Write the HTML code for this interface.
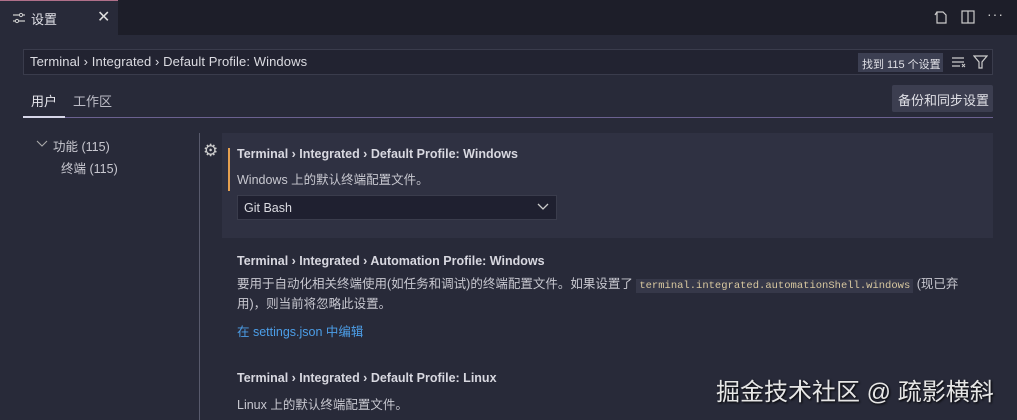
<html><head><style>
body{margin:0;width:1017px;height:420px;background:#282a39;font-family:"Liberation Sans","Noto Sans CJK SC",sans-serif;color:#cfd0d8;overflow:hidden;position:relative;font-size:13px}
.a{position:absolute}
</style></head><body>
<div class="a" style="left:0;top:0;width:1017px;height:35px;background:#1d1e29"></div>
<div class="a" style="left:0;top:0;width:118px;height:35px;background:#282a39;border-top:1px solid #b0708a;box-sizing:border-box"></div>
<svg class="a" style="left:12px;top:12px" width="14" height="12"><path d="M1 3h12M1 9h12" stroke="#ccc" stroke-width="1.3"/><circle cx="9" cy="3" r="1.6" fill="#282a39" stroke="#ccc"/><circle cx="5" cy="9" r="1.6" fill="#282a39" stroke="#ccc"/></svg>
<div class="a" style="left:31px;top:9px;font-size:13px;color:#e0e0e6">设置</div>
<div class="a" style="left:97px;top:7px;font-size:16px;color:#ddd">✕</div>
<svg class="a" style="left:933px;top:9px" width="16" height="16"><path d="M4 3h6l3 3v8H4z M2 6l2-3" fill="none" stroke="#ccc" stroke-width="1.2"/></svg>
<svg class="a" style="left:961px;top:10px" width="14" height="14"><rect x="1" y="1" width="12" height="12" fill="none" stroke="#ccc" stroke-width="1.2"/><path d="M7 1v12" stroke="#ccc" stroke-width="1.2"/></svg>
<div class="a" style="left:987px;top:6px;font-size:14px;color:#ccc;letter-spacing:1px">···</div>
<div class="a" style="left:23px;top:49px;width:970px;height:26px;background:#222331;border:1px solid #3a3c4c;box-sizing:border-box"></div>
<div class="a" style="left:30px;top:54px;font-size:13px;letter-spacing:0.1px;color:#dcdce2">Terminal › Integrated › Default Profile: Windows</div>
<div class="a" style="left:858px;top:53px;width:85px;height:19px;background:#3c3f52"></div>
<div class="a" style="left:862px;top:56px;font-size:11px;color:#e0e0e6">找到 115 个设置</div>
<svg class="a" style="left:951px;top:56px" width="16" height="12"><path d="M1 2h12M1 6h12M1 10h8" stroke="#ccc" stroke-width="1.2"/><path d="M11 8l3 3M14 8l-3 3" stroke="#ccc"/></svg>
<svg class="a" style="left:973px;top:55px" width="15" height="14"><path d="M1 1h13L9 7v6H6V7z" fill="none" stroke="#ccc" stroke-width="1.2"/></svg>
<div class="a" style="left:31px;top:91px;font-size:13px;color:#e8e8ee">用户</div>
<div class="a" style="left:73px;top:91px;font-size:13px;color:#bcbcc6">工作区</div>
<div class="a" style="left:23px;top:117px;width:970px;height:1px;background:#6b6190"></div>
<div class="a" style="left:23px;top:116px;width:42px;height:2px;background:#d6d6e8"></div>
<div class="a" style="left:892px;top:85px;width:101px;height:27px;background:#3c3e50;border-radius:2px"></div>
<div class="a" style="left:898px;top:90px;font-size:13px;color:#e0e0e6">备份和同步设置</div>
<svg class="a" style="left:36px;top:140px" width="12" height="8"><path d="M1 1l5 5 5-5" fill="none" stroke="#aaa" stroke-width="1.1"/></svg>
<div class="a" style="left:53px;top:136px;font-size:12.5px;color:#c8c8d0">功能 (115)</div>
<div class="a" style="left:61px;top:158px;font-size:12.5px;color:#c8c8d0">终端 (115)</div>
<div class="a" style="left:199px;top:133px;width:1px;height:287px;background:#585a6c"></div>
<div class="a" style="left:222px;top:133px;width:771px;height:105px;background:#2f3142"></div>
<div class="a" style="left:203px;top:141px;font-size:17px;color:#ccc">⚙</div>
<div class="a" style="left:228px;top:148px;width:2px;height:43px;background:#e5a050"></div>
<div class="a" style="left:237px;top:147px;font-size:12.5px;font-weight:bold;color:#d8d8e0">Terminal › Integrated › Default Profile: Windows</div>
<div class="a" style="left:237px;top:169px;font-size:12.5px;color:#c8c8d0">Windows 上的默认终端配置文件。</div>
<div class="a" style="left:237px;top:195px;width:320px;height:25px;background:#1f2030;border:1px solid #3a3c4c;box-sizing:border-box"></div>
<div class="a" style="left:244px;top:201px;font-size:12.5px;color:#dcdce2">Git Bash</div>
<svg class="a" style="left:537px;top:203px" width="12" height="8"><path d="M1 1l5 5 5-5" fill="none" stroke="#ccc" stroke-width="1.3"/></svg>
<div class="a" style="left:237px;top:254px;font-size:12.5px;font-weight:bold;color:#d8d8e0">Terminal › Integrated › Automation Profile: Windows</div>
<div class="a" style="left:237px;top:275px;width:750px;font-size:12.5px;line-height:18px;color:#c8c8d0">要用于自动化相关终端使用(如任务和调试)的终端配置文件。如果设置了 <span style="font-family:'Liberation Mono',monospace;font-size:10.5px;background:#363849;color:#d8c8a0;padding:1px 3px">terminal.integrated.automationShell.windows</span> (现已弃用)，则当前将忽略此设置。</div>
<div class="a" style="left:237px;top:321px;font-size:12.5px;color:#4c9ee8">在 settings.json 中编辑</div>
<div class="a" style="left:237px;top:371px;font-size:12.5px;font-weight:bold;color:#d8d8e0">Terminal › Integrated › Default Profile: Linux</div>
<div class="a" style="left:237px;top:394px;font-size:12.5px;color:#c8c8d0">Linux 上的默认终端配置文件。</div>
<div class="a" style="left:716px;top:372px;font-size:24px;color:#e6e6e6;text-shadow:1px 1px 2px #000;white-space:nowrap">掘金技术社区 @ 疏影横斜</div>
</body></html>
